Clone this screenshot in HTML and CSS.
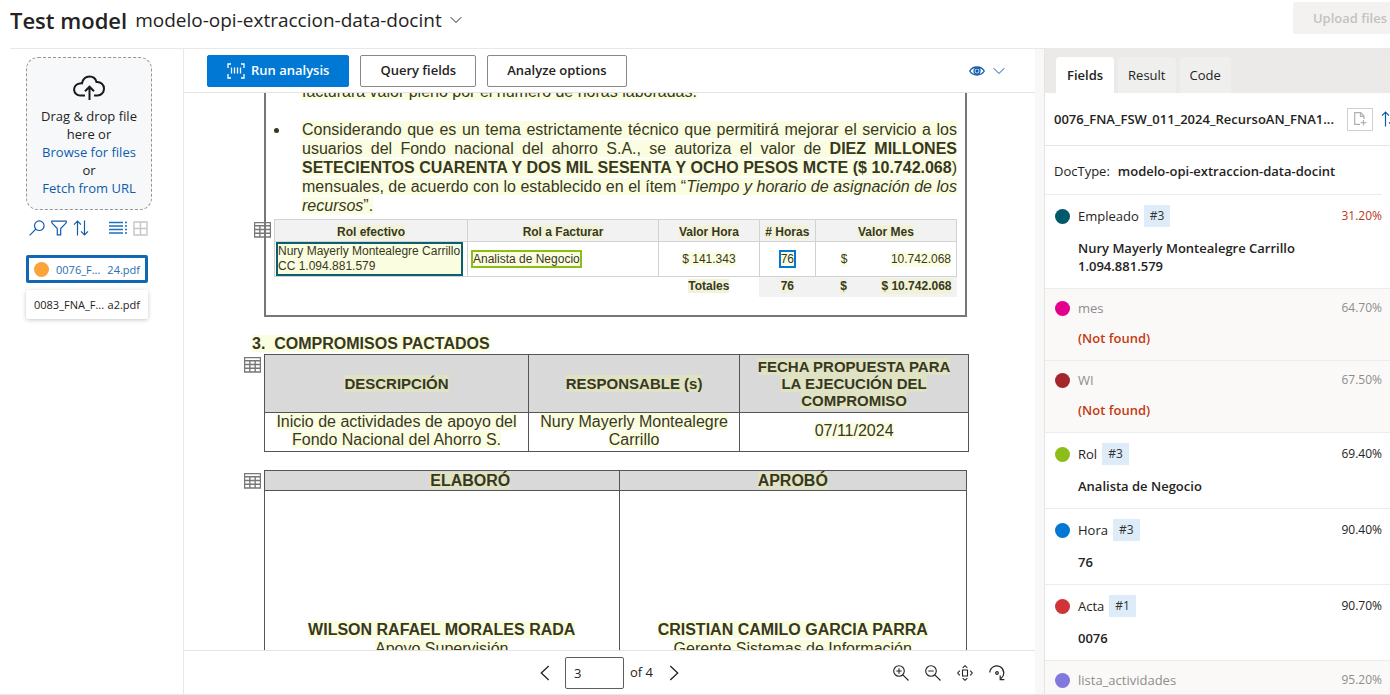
FILE: index.html
```html
<!DOCTYPE html>
<html lang="en">
<head>
<meta charset="utf-8">
<title>Test model</title>
<link rel="stylesheet" href="styles.css">
</head>
<body>
<svg width="0" height="0" class="defs" aria-hidden="true">
  <symbol id="i-table" viewBox="0 0 16 16"><path d="M.5 1.500h15v13.500h-15zM.5 4.500h15M.5 8h15M.5 11.500h15M5.500 4.500v10.500M10.500 4.500v10.500" fill="none" stroke="#777" stroke-width="1.300"/></symbol>
  <symbol id="i-down" viewBox="0 0 12 8"><path d="M.7 1.200 6 6.500l5.300-5.300" fill="none" stroke="currentColor"/></symbol>
  <symbol id="i-sort" viewBox="0 0 16 16"><path d="M4.500 15.500V1.200M1 4.700l3.500-3.500L8 4.700M11.500 .5v14.300M8 11.300l3.500 3.500 3.500-3.500" fill="none" stroke="currentColor" stroke-width="1.200"/></symbol>
</svg>
<header class="header">
  <h1 class="title">Test model</h1>
  <button class="model">modelo-opi-extraccion-data-docint <svg width="12" height="8"><use href="#i-down"/></svg></button>
  <button class="upload" disabled>Upload files</button>
</header>
<div class="workspace">
  <aside class="sidebar">
    <div class="drop">
      <svg class="cloud" width="32" height="26" viewBox="0 0 32 26" fill="none" stroke="#1b1a19" stroke-width="2"><path d="M12 20.500H7.500a6 6 0 0 1-.8-12C8 8 8.600 8.200 9 8.300 9.800 4.500 12.500 1.500 16.500 1.500c3.500 0 6.200 2.200 7 5.500 4.500-.4 7.500 2.800 7.500 6.700 0 3.800-3 6.800-6.500 6.800H21"/><path d="M16.500 25V12M12 16.200l4.500-4.500 4.500 4.500"/></svg>
      <span>Drag &amp; drop file</span><span>here or</span>
      <a href="#browse">Browse for files</a><span>or</span><a href="#url">Fetch from URL</a>
    </div>
    <div class="tools">
      <button aria-label="Search"><svg width="16" height="16" viewBox="0 0 16 16" fill="none" stroke="currentColor" stroke-width="1.200"><circle cx="10.300" cy="5.700" r="4.800"/><path d="M6.800 9.200.6 15.400"/></svg></button>
      <button aria-label="Filter"><svg width="16" height="16" viewBox="0 0 16 16" fill="none" stroke="currentColor" stroke-width="1.200"><path d="M.8 1.200h14.400v1.600L9.700 8.500v6.300H6.300V8.500L.8 2.800z"/></svg></button>
      <button aria-label="Sort"><svg width="16" height="16"><use href="#i-sort"/></svg></button>
      <button class="list" aria-label="List view"><svg width="18" height="14" viewBox="0 0 18 14" fill="none" stroke="currentColor" stroke-width="1.300"><path d="M0 1.500h14M0 5h14M0 8.500h14M0 12h14"/><path d="M16 1.500h2M16 5h2M16 8.500h2M16 12h2"/></svg></button>
      <button class="grid" aria-label="Grid view"><svg width="15" height="15" viewBox="0 0 15 15" fill="none" stroke="currentColor" stroke-width="1.400"><path d="M1 1h13v13H1zM7.500 1v13M1 7.500h13"/></svg></button>
    </div>
    <button class="file selected"><i class="dot orange"></i><span>0076_F...</span><span>24.pdf</span></button>
    <button class="file"><span>0083_FNA_F...</span><span>a2.pdf</span></button>
  </aside>
  <main class="viewer">
    <div class="toolbar">
      <button class="btn primary"><svg width="18" height="16" viewBox="0 0 18 16" fill="none" stroke="currentColor" stroke-width="1.300"><path d="M4 1H1v4M14 1h3v4M4 15H1v-4M14 15h3v-4M4.500 4.500v6M7.500 4.500v6M10.500 4.500v6M13.500 4.500v6"/></svg>Run analysis</button>
      <button class="btn">Query fields</button>
      <button class="btn">Analyze options</button>
      <button class="view" aria-label="View options"><svg width="16" height="10" viewBox="0 0 16 10" fill="none" stroke="currentColor" stroke-width="1.300"><path d="M.7 5C2.500 2.200 5 1 8 1s5.500 1.200 7.300 4C13.500 7.800 11 9 8 9S2.500 7.800.7 5z"/><circle cx="8" cy="5" r="3"/><circle cx="8" cy="5" r="1" fill="currentColor"/></svg><svg width="12" height="8"><use href="#i-down"/></svg></button>
    </div>
    <div class="canvas">
      <div class="page">
        <section class="box">
          <p class="prev"><mark>facturará valor pleno por el número de horas laboradas.</mark></p>
          <ul class="notes"><li>
            <span class="line"><mark>Considerando que es un tema estrictamente técnico que permitirá mejorar el servicio a los</mark></span>
            <span class="line"><mark>usuarios del Fondo nacional del ahorro S.A., se autoriza el valor de <b>DIEZ MILLONES</b></mark></span>
            <span class="line"><mark><b>SETECIENTOS CUARENTA Y DOS MIL SESENTA Y OCHO PESOS MCTE ($ 10.742.068</b>)</mark></span>
            <span class="line"><mark>mensuales, de acuerdo con lo establecido en el ítem “<em>Tiempo y horario de asignación de los</em></mark></span>
            <span class="line last"><mark><em>recursos</em>”.</mark></span>
          </li></ul>
          <div class="anchor">
            <svg class="mark-icon" width="17" height="17"><use href="#i-table"/></svg>
            <table class="rates">
              <colgroup><col class="c1"><col class="c2"><col class="c3"><col class="c4"><col class="c5"></colgroup>
              <thead><tr><th><mark>Rol efectivo</mark></th><th><mark>Rol a Facturar</mark></th><th><mark>Valor Hora</mark></th><th><mark># Horas</mark></th><th><mark>Valor Mes</mark></th></tr></thead>
              <tbody>
                <tr><td class="who"><div class="hit teal"><mark>Nury Mayerly Montealegre Carrillo</mark><br><mark>CC 1.094.881.579</mark></div></td><td class="role"><mark class="hit green">Analista de Negocio</mark></td><td><mark>$ 141.343</mark></td><td><mark class="hit blue">76</mark></td><td><div class="money"><mark>$</mark><mark>10.742.068</mark></div></td></tr>
                <tr class="total"><td class="none" colspan="2"></td><td class="none"><mark>Totales</mark></td><td><mark>76</mark></td><td><div class="money"><mark>$</mark><mark>$ 10.742.068</mark></div></td></tr>
              </tbody>
            </table>
          </div>
        </section>
        <h2 class="section"><mark>3.&nbsp; COMPROMISOS PACTADOS</mark></h2>
        <div class="anchor">
          <svg class="mark-icon" width="17" height="17"><use href="#i-table"/></svg>
          <table class="plan">
            <colgroup><col class="p1"><col class="p2"><col class="p3"></colgroup>
            <thead><tr><th><mark>DESCRIPCIÓN</mark></th><th><mark>RESPONSABLE (s)</mark></th><th><mark>FECHA PROPUESTA PARA<br>LA EJECUCIÓN DEL<br>COMPROMISO</mark></th></tr></thead>
            <tbody><tr><td><mark>Inicio de actividades de apoyo del<br>Fondo Nacional del Ahorro S.</mark></td><td><mark>Nury Mayerly Montealegre<br>Carrillo</mark></td><td><mark>07/11/2024</mark></td></tr></tbody>
          </table>
        </div>
        <div class="anchor signs">
          <svg class="mark-icon" width="17" height="17"><use href="#i-table"/></svg>
          <table class="sign">
            <thead><tr><th class="made"><mark>ELABORÓ</mark></th><th><mark>APROBÓ</mark></th></tr></thead>
            <tbody><tr><td><mark><b>WILSON RAFAEL MORALES RADA</b></mark><br><mark>Apoyo Supervisión</mark></td><td><mark><b>CRISTIAN CAMILO GARCIA PARRA</b></mark><br><mark>Gerente Sistemas de Información</mark></td></tr></tbody>
          </table>
        </div>
      </div>
    </div>
    <div class="pager">
      <div class="pages">
        <button aria-label="Previous page"><svg width="10" height="16" viewBox="0 0 10 16" fill="none" stroke="currentColor" stroke-width="1.300"><path d="M8.700 1 1.300 8l7.400 7"/></svg></button>
        <input id="page" type="text" value="3" aria-label="Page"><label for="page">of 4</label>
        <button aria-label="Next page"><svg width="10" height="16" viewBox="0 0 10 16" fill="none" stroke="currentColor" stroke-width="1.300"><path d="m1.300 1 7.400 7-7.400 7"/></svg></button>
      </div>
      <div class="zoom">
        <button aria-label="Zoom in"><svg width="16" height="16" viewBox="0 0 16 16" fill="none" stroke="currentColor" stroke-width="1.100"><circle cx="6" cy="6" r="5.300"/><path d="m9.800 9.800 5.700 5.700M6 3.300v5.400M3.300 6h5.400"/></svg></button>
        <button aria-label="Zoom out"><svg width="16" height="16" viewBox="0 0 16 16" fill="none" stroke="currentColor" stroke-width="1.100"><circle cx="6" cy="6" r="5.300"/><path d="m9.800 9.800 5.700 5.700M3.300 6h5.400"/></svg></button>
        <button aria-label="Fit page"><svg width="16" height="16" viewBox="0 0 16 16" fill="none" stroke="currentColor" stroke-width="1.100"><path d="M5.500 5h5v6h-5zM5.700 2.800 8 .7l2.300 2.100M5.700 13.200 8 15.300l2.300-2.100M2.800 5.700.7 8l2.100 2.300M13.200 5.700 15.300 8l-2.100 2.300"/></svg></button>
        <button aria-label="Rotate"><svg width="16" height="16" viewBox="0 0 16 16" fill="none" stroke="currentColor" stroke-width="1.200"><path d="M.8 7.500A7 7 0 1 1 12 13.500M15.300 14.600h-4.100v-4.100"/><circle cx="8" cy="8" r="1.300"/></svg></button>
      </div>
    </div>
  </main>
  <section class="panel">
    <nav class="tabs"><button class="tab active">Fields</button><button class="tab">Result</button><button class="tab">Code</button></nav>
    <div class="doc">
      <span class="name">0076_FNA_FSW_011_2024_RecursoAN_FNA1...</span>
      <button class="add" aria-label="Add document"><svg width="13" height="14" viewBox="0 0 13 14" fill="none" stroke="currentColor" stroke-width="1.200"><path d="M6 12.400H.7V.7h6.100L10 4v3M6.500 .7v3.600H10M9.500 8v5.500M6.700 10.700h5.600"/></svg></button>
      <button class="order" aria-label="Sort fields"><svg width="16" height="16"><use href="#i-sort"/></svg></button>
    </div>
    <div class="type"><span>DocType:</span><strong>modelo-opi-extraccion-data-docint</strong></div>
    <ul class="fields">
      <li><div class="top"><i class="dot teal-dot"></i><span>Empleado</span><a href="#p3">#3</a><output class="low">31.20%</output></div><p>Nury Mayerly Montealegre Carrillo<br>1.094.881.579</p></li>
      <li class="muted"><div class="top"><i class="dot pink"></i><span>mes</span><output>64.70%</output></div><p class="missing">(Not found)</p></li>
      <li class="muted"><div class="top"><i class="dot maroon"></i><span>WI</span><output>67.50%</output></div><p class="missing">(Not found)</p></li>
      <li><div class="top"><i class="dot lime"></i><span>Rol</span><a href="#p3">#3</a><output>69.40%</output></div><p>Analista de Negocio</p></li>
      <li><div class="top"><i class="dot azure"></i><span>Hora</span><a href="#p3">#3</a><output>90.40%</output></div><p>76</p></li>
      <li><div class="top"><i class="dot red"></i><span>Acta</span><a href="#p1">#1</a><output>90.70%</output></div><p>0076</p></li>
      <li class="muted"><div class="top"><i class="dot violet"></i><span>lista_actividades</span><output>95.20%</output></div></li>
    </ul>
  </section>
</div>
</body>
</html>
```
FILE: styles.css
```css
* { box-sizing: border-box; }
body {
  margin: 0; height: 100vh; overflow: hidden; display: flex; flex-direction: column;
  background: #fff; color: #242322; font: 13px/19px "Open Sans", "Noto Sans", sans-serif;
}
button { font: inherit; color: inherit; background: none; border: 0; padding: 0; display: flex; align-items: center; }
h1, h2, p, ul { margin: 0; padding: 0; }
ul { list-style: none; }
a { color: #0f5bab; text-decoration: none; }
svg { flex: none; display: block; }
.defs { position: absolute; }

.header { flex: none; height: 49px; margin-left: 10px; padding-bottom: 8px; display: flex; align-items: center; border-bottom: 1px solid #e8e8e8; }
.title { font-size: 22px; line-height: 28px; font-weight: 600; }
.model { margin-left: 8px; gap: 8px; font-size: 19px; line-height: 28px; }
.upload { margin: 0 -17px 4px auto; height: 32px; padding: 0 20px; border-radius: 2px; background: #f3f2f1; color: #c4c2c0; font-weight: 600; }

.workspace { flex: 1; min-height: 0; display: grid; grid-template-columns: 183px minmax(0, 1fr) 355px; border-bottom: 1px solid #e8e8e8; }

.sidebar { padding: 8px 31px 0 26px; }
.drop { height: 153px; padding-top: 17px; display: flex; flex-direction: column; align-items: center; border: 1px dashed #979593; border-radius: 12px; background: #f6f8fa; line-height: 18px; }
.cloud { margin-bottom: 6px; }
.tools { display: flex; align-items: center; margin: 10px 4px 19px 3px; gap: 6px; color: #0f5bab; }
.list { margin-left: auto; color: #1f70bd; }
.grid { color: #c8c6c4; }
.file { width: 122px; height: 29px; margin-bottom: 7px; padding: 0 8px; font-size: 11px; justify-content: space-between; border-radius: 2px; background: #fff; box-shadow: 0 1px 4px #00000038; }
.file.selected { height: 28px; padding: 0 5px; border: 3px solid #1267b4; color: #2b6cb0; box-shadow: none; }

.viewer { min-width: 0; min-height: 0; display: flex; flex-direction: column; border-left: 1px solid #e8e8e8; }
.toolbar { flex: none; height: 44px; display: flex; align-items: center; gap: 11px; padding: 0 30px 0 23px; border-bottom: 1px solid #e4e4e4; }
.btn { height: 32px; padding: 0 19px; gap: 6px; border: 1px solid #8a8886; border-radius: 2px; font-weight: 600; }
.btn.primary { background: #0078d4; border-color: #0078d4; color: #fff; }
.view { margin-left: auto; gap: 8px; color: #0f5bab; }

.canvas { flex: 1; min-height: 0; overflow: hidden; padding: 0 68px 0 80px; font-family: "Liberation Sans", Arial, sans-serif; }
mark { color: #37381f; background: #fbfde0; }
th mark { background: #e0e2c4; }
.box { border: 2px solid #777; border-top: 0; padding: 0 8px 18px; }
.prev { margin: -11px 0 19px 28px; font-size: 16px; line-height: 19px; }
.notes { font-size: 16px; line-height: 19px; padding-left: 16px; list-style: disc; color: #37381f; }
.notes li { padding-left: 12px; }
.line { display: block; white-space: nowrap; text-align-last: justify; }
.last { text-align-last: left; }
.anchor { position: relative; }
.mark-icon { position: absolute; left: -20px; top: 2px; }
table { width: 100%; border-collapse: collapse; table-layout: fixed; text-align: center; }
th, td { padding: 0; }
.rates { margin-top: 4px; font-size: 12px; line-height: 15px; }
.rates th, .rates td { border: 1px solid #d2d2d2; }
.rates th { height: 22px; padding-top: 4px; background: #f2f2f2; }
.rates th mark, .total mark { background: #f1f2d8; }
.rates td { height: 35px; }
.rates .total td { height: 20px; border: 0; background: #f2f2f2; font-weight: 700; }
.rates .total .none { background: none; }
.c1 { width: 28.3%; } .c2 { width: 28%; } .c3 { width: 14.8%; } .c4 { width: 8.2%; } .c5 { width: 20.7%; }
.who, .role { text-align: left; white-space: nowrap; }
.rates .role { padding-left: 3px; }
.hit { border: 2px solid; }
.hit.teal { width: 187px; margin-left: 1px; border-color: #0b6070; background: #fbfde0; }
.hit.green { border-color: #8cbd18; }
.hit.blue { border-color: #0078d4; }
.money { display: flex; justify-content: space-between; padding: 0 5px 0 25px; }
.section { margin: 17px 0 1px -12px; font-size: 16px; line-height: 19px; }
.plan { width: calc(100% + 2px); }
.plan th, .plan td, .sign th, .sign td { border: 1px solid #555; }
.plan th, .sign th { background: #d9d9d9; }
.plan th { font-size: 15px; line-height: 17px; padding: 3px 0; }
.plan td { font-size: 16px; line-height: 18px; padding-bottom: 2px; }
.p1 { width: 37.5%; } .p2 { width: 30%; } .p3 { width: 32.5%; }
.signs { margin-top: 18px; }
.sign { font-size: 16px; line-height: 19px; }
.sign .made { width: 50.5%; padding-left: 57px; }
.sign td { height: 168px; vertical-align: bottom; }

.pager { flex: none; height: 44px; padding: 0 30px; display: grid; grid-template-columns: 1fr auto 1fr; align-items: center; border-top: 1px solid #e4e4e4; }
.pages { grid-column: 2; display: flex; align-items: center; }
.pages input { width: 59px; height: 32px; margin: 0 6px 0 15px; padding: 0 8px; border: 1px solid #605e5c; border-radius: 2px; font: inherit; color: inherit; }
.pages label { margin-right: 16px; }
.zoom { justify-self: end; display: flex; gap: 16px; }

.panel { min-width: 0; overflow: hidden; border-left: 9px solid #f8f8f8; box-shadow: inset 1px 0 #e4e4e4; padding-left: 1px; }
.tabs { height: 44px; padding: 8px 11px 0; display: flex; gap: 4px; background: #ebeae9; }
.tab { padding: 0 10px; border-radius: 4px 4px 0 0; background: #efefee; }
.tab.active { padding: 0 11px; background: #fff; font-weight: 600; }
.doc { height: 53px; padding-left: 9px; display: flex; align-items: center; border-bottom: 1px solid #e4e4e4; }
.name { width: 293px; flex: none; white-space: nowrap; font-weight: 600; }
.add { flex: none; width: 26px; height: 23px; justify-content: center; border: 1px solid #d2d0ce; color: #b3b0ad; }
.order { margin-left: 8px; color: #0f5bab; }
.type { height: 49px; margin-right: 8px; padding: 3px 0 0 9px; display: flex; align-items: center; gap: 8px; border-bottom: 1px solid #ececec; white-space: nowrap; }
.type strong { font-weight: 600; }
.fields li { padding: 10px 8px 13px 10px; border-bottom: 1px solid #ececec; line-height: 18px; }
.top { display: flex; align-items: center; margin-bottom: 12px; }
.top span { margin-left: 8px; }
.top a { margin-left: 5px; padding: 2px 6px; font-size: 12px; background: #deecf9; color: #323130; }
.top output { margin-left: auto; font-size: 12px; }
.fields p { margin-left: 23px; font-weight: 600; }
.fields .missing { color: #c43a10; }
.fields .low { color: #b8371d; }
.muted { background: #faf9f8; color: #8f8d8b; }
.dot { flex: none; width: 15px; height: 15px; border-radius: 50%; }
.orange { background: #faa43a; } .teal-dot { background: #00586b; } .pink { background: #e3008c; }
.maroon { background: #a4262c; } .lime { background: #8cbd18; } .azure { background: #0078d4; }
.red { background: #d13438; } .violet { background: #8378de; }
```
